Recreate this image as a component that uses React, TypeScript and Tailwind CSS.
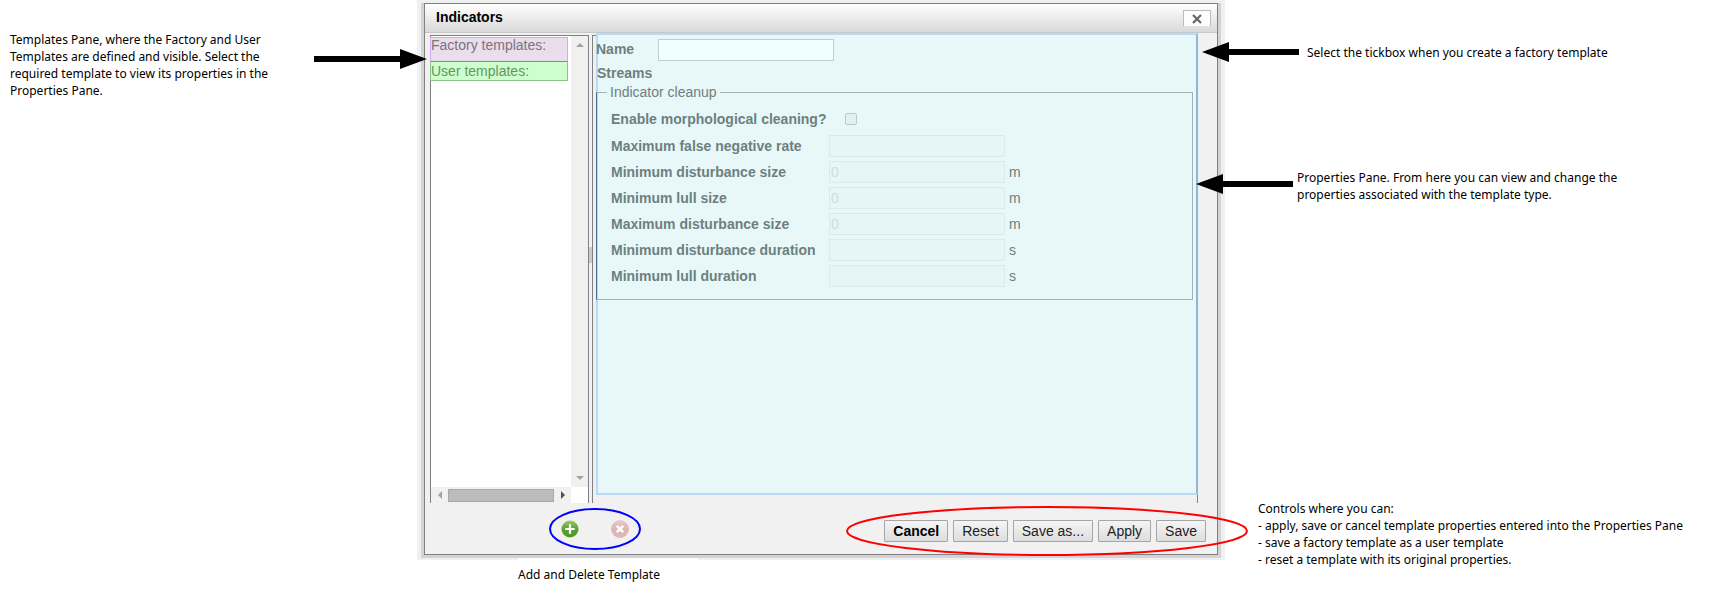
import React from "react";

type Field = { id: string; label: string; value?: string; unit?: string };

const fields: Field[] = [
  { id: "max-false-negative", label: "Maximum false negative rate" },
  { id: "min-disturbance-size", label: "Minimum disturbance size", value: "0", unit: "m" },
  { id: "min-lull-size", label: "Minimum lull size", value: "0", unit: "m" },
  { id: "max-disturbance-size", label: "Maximum disturbance size", value: "0", unit: "m" },
  { id: "min-disturbance-duration", label: "Minimum disturbance duration", unit: "s" },
  { id: "min-lull-duration", label: "Minimum lull duration", unit: "s" },
];

const actions = ["Cancel", "Reset", "Save as...", "Apply", "Save"];

function ArrowLeft() {
  return (
    <svg className="h-5 w-[97px] shrink-0" viewBox="0 0 97 20" aria-hidden="true">
      <path d="M0 10 27 0V7H97V13H27V20Z" fill="#000" />
    </svg>
  );
}

function ArrowRight() {
  return (
    <svg className="h-5 w-[113px] shrink-0" viewBox="0 0 113 20" aria-hidden="true">
      <path d="M113 10 86 0V7H0V13H86V20Z" fill="#000" />
    </svg>
  );
}

function Caret({ d, className }: { d: string; className: string }) {
  return (
    <svg className={className} viewBox="0 0 8 8" aria-hidden="true">
      <path d={d} fill="currentColor" />
    </svg>
  );
}

function TemplatesPane() {
  return (
    <section className="flex w-[159px] shrink-0 flex-col border-x border-t border-[#808080] bg-white">
      <div className="flex flex-1">
        <div className="flex-1">
          <div className="-ml-px mr-[3px] mt-px h-6 border border-b-0 border-[#d0adf0] bg-[#eaddec] text-[14px] leading-[14px] text-[#7b747c]">
            Factory templates:
          </div>
          <div className="-ml-px mr-[3px] h-5 border border-[#8bc48b] border-t-[#8d83a5] bg-[#ccffcc] text-[14px] leading-[18px] text-[#669466]">
            User templates:
          </div>
        </div>
        <div className="flex w-[17px] flex-col items-center justify-between bg-[#f0f0f0] py-[5px] text-[#a3a3a3]">
          <Caret className="size-2" d="M0 6 4 2 8 6Z" />
          <Caret className="size-2" d="M0 2 4 6 8 2Z" />
        </div>
      </div>
      <div className="mr-[17px] flex h-4 items-center bg-[#f1f1f1]">
        <div className="flex w-[17px] justify-center text-[#a3a3a3]">
          <Caret className="size-2" d="M6 0 2 4 6 8Z" />
        </div>
        <div className="h-[13px] flex-1 border border-[#a8a8a8] bg-[#bcbcbc]" />
        <div className="flex w-[17px] justify-center text-[#505050]">
          <Caret className="size-2" d="M2 0 6 4 2 8Z" />
        </div>
      </div>
    </section>
  );
}

function PropertiesPane() {
  return (
    <section className="relative flex-1 border-x border-t border-[#808080] bg-[#f0f0f0] pl-[3px] text-[14px] text-[#6c8080]">
      <div className="absolute -top-[3px] -right-px bottom-2 left-[3px] border-2 border-[#b8daf8] border-r-[#8bb8dc] bg-[#e8f8f8]" />
      <div className="relative">
        <div className="flex h-[27px] items-center">
          <label htmlFor="name" className="w-[62px] font-bold">Name</label>
          <input id="name" className="h-[22px] w-[176px] border border-[#c0d0d0] bg-[#f0ffff] px-1 outline-none" />
        </div>
        <div className="pl-px font-bold leading-5">Streams</div>
        <fieldset className="mr-1 border border-[#a2b3b3] border-l-[#4a6d94] px-[14px] pb-[10px]">
          <legend className="-ml-1 px-[3px] leading-[18px]">Indicator cleanup</legend>
          <div className="flex h-8 items-center gap-[19px] pt-1">
            <label htmlFor="cleaning" className="font-bold">Enable morphological cleaning?</label>
            <input
              id="cleaning"
              type="checkbox"
              className="size-3 appearance-none rounded-[2px] border border-[#b9c9c9] bg-[#e2f0f0]"
            />
          </div>
          {fields.map((f) => (
            <div key={f.id} className="flex h-[26px] items-center">
              <label htmlFor={f.id} className="w-[218px] whitespace-nowrap font-bold">{f.label}</label>
              <input
                id={f.id}
                disabled
                defaultValue={f.value}
                className="h-[22px] w-[176px] border border-[#dae9e9] bg-[#e6f5f5] px-px text-[#cfdddd]"
              />
              <span className="pl-1">{f.unit}</span>
            </div>
          ))}
        </fieldset>
      </div>
    </section>
  );
}

function TemplateButtons() {
  return (
    <div className="relative ml-[136px] flex items-center gap-8 pt-px">
      <button type="button" aria-label="Add template">
        <svg className="block size-[18px]" viewBox="0 0 18 18">
          <defs>
            <linearGradient id="add" x1="0" y1="0" x2="0" y2="1">
              <stop offset="0" stopColor="#9ccb70" />
              <stop offset="0.5" stopColor="#5ca12f" />
              <stop offset="1" stopColor="#4c981d" />
            </linearGradient>
          </defs>
          <circle cx="9" cy="9" r="8.5" fill="url(#add)" />
          <path d="M9 4.3V13.7M4.3 9H13.7" stroke="#fff" strokeWidth="2.2" />
        </svg>
      </button>
      <button type="button" aria-label="Delete template" disabled>
        <svg className="block size-[18px]" viewBox="0 0 18 18">
          <defs>
            <linearGradient id="del" x1="0" y1="0" x2="0" y2="1">
              <stop offset="0" stopColor="#e9cccc" />
              <stop offset="0.5" stopColor="#deb4b4" />
              <stop offset="1" stopColor="#e0b8b6" />
            </linearGradient>
          </defs>
          <circle cx="9" cy="9" r="9" fill="url(#del)" />
          <path d="M5.8 5.8 12.2 12.2M12.2 5.8 5.8 12.2" stroke="#fff" strokeWidth="2.4" />
        </svg>
      </button>
      <svg className="pointer-events-none absolute -left-3 -top-[11px] h-[42px] w-[92px]" viewBox="0 0 92 42" aria-hidden="true">
        <ellipse cx="46" cy="21" rx="45" ry="20" fill="none" stroke="#0000ff" strokeWidth="2" />
      </svg>
    </div>
  );
}

function ActionButtons() {
  return (
    <div className="relative mr-[11px] flex items-center gap-[5px] pt-[5px]">
      {actions.map((a) => (
        <button
          key={a}
          type="button"
          className="h-[22px] whitespace-nowrap rounded-[1px] border border-[#a5a5a5] bg-linear-to-b from-[#f5f5f5] to-[#dddddd] px-2 text-[14px] leading-5 text-[#222] first:font-bold first:text-black"
        >
          {a}
        </button>
      ))}
      <svg className="pointer-events-none absolute -right-[42px] -top-[9px] h-[50px] w-[402px]" viewBox="0 0 402 50" aria-hidden="true">
        <ellipse cx="201" cy="25" rx="200" ry="24" fill="none" stroke="#ff0000" strokeWidth="2" />
      </svg>
    </div>
  );
}

export default function App() {
  return (
    <main className="grid grid-cols-[417fr_808fr_492fr] items-start bg-white font-['Liberation_Sans',Arial,sans-serif] text-black">
      <aside className="relative z-10 flex items-start justify-between pt-[31px] pl-[10px] font-['Noto_Sans',sans-serif] text-[12px] leading-[17px]">
        <p className="w-[280px]">
          Templates Pane, where the Factory and User
          <br />
          Templates are defined and visible. Select the
          <br />
          required template to view its properties in the
          <br />
          Properties Pane.
        </p>
        <div className="-mr-[10px] pt-[18px]">
          <ArrowRight />
        </div>
      </aside>

      <div>
        <div className="bg-[#f0f0f0] px-1 pt-1 pb-[2px]">
          <div className="bg-[#d3d3d3] px-[3px] pb-[3px]">
            <div className="-mt-px border border-[#808080] bg-[#f1f1f1]">
              <header className="flex h-[29px] items-center justify-between border-b border-[#c8c8c8] bg-linear-to-b from-white to-[#d9d9d9] pr-[6px] pl-[11px]">
                <h1 className="pb-[2px] text-[14px] font-bold">Indicators</h1>
                <button
                  type="button"
                  aria-label="Close"
                  className="flex h-4 w-7 items-center justify-center border border-b-0 border-[#bcbcbc] bg-[#fdfdfd]"
                >
                  <svg className="size-[10px]" viewBox="0 0 10 10">
                    <path d="M1 1 9 9M9 1 1 9" stroke="#666" strokeWidth="2.2" />
                  </svg>
                </button>
              </header>
              <div className="mr-[19px] ml-[5px] flex h-[470px] pt-[2px]">
                <TemplatesPane />
                <div className="flex w-[3px] items-center bg-[#edf2fb]">
                  <div className="-mt-7 h-4 w-full bg-[#cccccc]" />
                </div>
                <PropertiesPane />
              </div>
              <footer className="flex h-[51px] items-center justify-between">
                <TemplateButtons />
                <ActionButtons />
              </footer>
            </div>
          </div>
        </div>
        <p className="-mt-[2px] ml-[101px] w-[180px] bg-white pt-2 font-['Noto_Sans',sans-serif] text-[12px] leading-[17px]">
          Add and Delete Template
        </p>
      </div>

      <aside className="relative z-10 font-['Noto_Sans',sans-serif] text-[12px] leading-[17px]">
        <div className="-ml-[23px] flex items-center gap-2 pt-[42px]">
          <ArrowLeft />
          <p>Select the tickbox when you create a factory template</p>
        </div>
        <div className="-ml-[29px] flex items-center gap-1 pt-[103px]">
          <ArrowLeft />
          <p className="pt-1">
            Properties Pane. From here you can view and change the
            <br />
            properties associated with the template type.
          </p>
        </div>
        <div className="pt-[297px] pl-[33px]">
          <p>Controls where you can:</p>
          <ul>
            <li>- apply, save or cancel template properties entered into the Properties Pane</li>
            <li>- save a factory template as a user template</li>
            <li>- reset a template with its original properties.</li>
          </ul>
        </div>
      </aside>
    </main>
  );
}
